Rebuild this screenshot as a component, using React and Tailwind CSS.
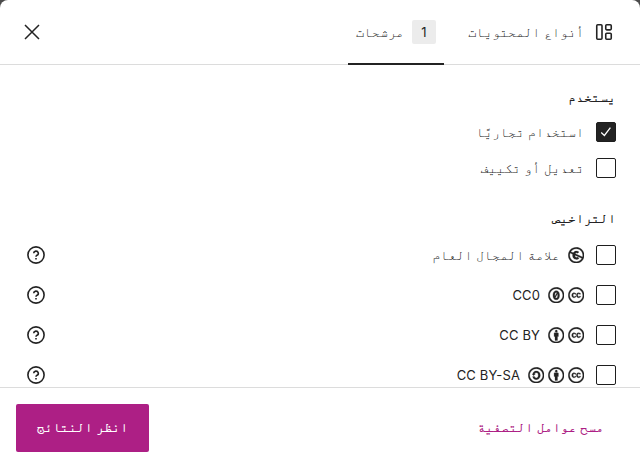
import React from "react";
import {
  FaCreativeCommons,
  FaCreativeCommonsBy,
  FaCreativeCommonsPd,
  FaCreativeCommonsSa,
  FaCreativeCommonsZero,
} from "react-icons/fa";

function Checkbox({ checked }) {
  return (
    <span
      className={
        "flex size-5 shrink-0 items-center justify-center rounded-xs border border-[#1e1e1e] " +
        (checked ? "bg-[#232323]" : "bg-white")
      }
    >
      {checked && (
        <svg viewBox="0 0 20 20" className="size-5 shrink-0" fill="none" stroke="#fff" strokeWidth="1.3">
          <path d="M5.2 10.6 8.4 13.5 14.4 5.7" />
        </svg>
      )}
    </span>
  );
}

function HelpIcon() {
  return (
    <svg viewBox="0 0 20 20" className="size-5" fill="none" stroke="#232323" strokeWidth="1.6">
      <circle cx="10" cy="10" r="8.1" />
      <path d="M7.7 8.3a2.3 2.2 0 1 1 3.3 2c-.7.35-1 .7-1 1.4" />
      <path d="M10 12.9v1.6" />
    </svg>
  );
}

const licenses = [
  { label: "علامة المجال العام", arabic: true, icons: [FaCreativeCommonsPd] },
  { label: "CC0", icons: [FaCreativeCommons, FaCreativeCommonsZero] },
  { label: "CC BY", icons: [FaCreativeCommons, FaCreativeCommonsBy] },
  { label: "CC BY-SA", icons: [FaCreativeCommons, FaCreativeCommonsBy, FaCreativeCommonsSa] },
];

export default function App() {
  return (
    <div className="h-[467px] w-[640px] overflow-hidden bg-[#4b4b4b]">
      <div
        dir="rtl"
        className="flex h-full flex-col overflow-hidden rounded-t-lg bg-white font-['Inter','FreeMono','DejaVu_Sans_Mono',monospace] text-[13.33px] leading-5 text-[#232323]"
      >
        <header className="flex h-[65px] shrink-0 items-stretch border-b border-[#dcdcdc] pr-6 pl-5">
          <button className="flex w-[156px] items-center gap-2">
            <svg viewBox="0 0 24 24" className="size-6 shrink-0" fill="none" stroke="#232323" strokeWidth="1.6">
              <rect x="4.75" y="4.75" width="5.25" height="14.5" rx="1" />
              <rect x="13.75" y="4.75" width="5.5" height="5.1" rx="1" />
              <rect x="13.75" y="13.25" width="5.5" height="6" rx="1" />
            </svg>
            <span className="whitespace-nowrap">أنواع المحتويات</span>
          </button>
          <button className="mr-4 -mb-px flex w-24 items-center justify-start gap-2 border-b-2 border-[#232323] px-2">
            <span className="flex size-6 shrink-0 items-center justify-center rounded-xs bg-[#ececec] text-[13px]">1</span>
            <span className="whitespace-nowrap">مرشحات</span>
          </button>
          <button className="mr-auto" aria-label="إغلاق">
            <svg viewBox="0 0 24 24" className="size-6" fill="none" stroke="#232323" strokeWidth="1.5">
              <path d="m5 5 14 14M19 5 5 19" />
            </svg>
          </button>
        </header>

        <main className="min-h-0 flex-1 overflow-hidden px-6 pt-[22px]">
          <h2 className="font-semibold">يستخدم</h2>
          <div className="mt-[15px] flex flex-col gap-4">
            <label className="flex items-center gap-3">
              <Checkbox checked />
              <span>استخدام تجاريًا</span>
            </label>
            <label className="flex items-center gap-3">
              <Checkbox />
              <span>تعديل أو تكييف</span>
            </label>
          </div>
          <h2 className="mt-[30px] font-semibold">التراخيص</h2>
          <div className="mt-[17px] flex flex-col gap-5">
            {licenses.map(({ label, icons, arabic }) => (
              <div key={label} className="flex h-5 items-center justify-between pl-0.5">
                <label className="flex items-center">
                  <Checkbox />
                  <span className="mr-3 ml-2 flex gap-1">
                    {icons.map((Icon, i) => (
                      <span key={i} className="flex size-4 items-center justify-center">
                        <Icon className="size-[16.5px] shrink-0 stroke-current [stroke-width:8px]" />
                      </span>
                    ))}
                  </span>
                  <span className={arabic ? "" : "text-[13px] tracking-[0.01em]"}>{label}</span>
                </label>
                <HelpIcon />
              </div>
            ))}
          </div>
        </main>

        <footer className="flex h-20 shrink-0 items-center justify-between border-t border-[#dcdcdc] px-4 font-semibold">
          <button className="px-5 pb-0.5 text-[#ad1f85]">مسح عوامل التصفية</button>
          <button className="h-12 w-[133px] rounded-xs bg-[#ad1f85] pb-0.5 whitespace-nowrap text-white">
            انظر النتائج
          </button>
        </footer>
      </div>
    </div>
  );
}
